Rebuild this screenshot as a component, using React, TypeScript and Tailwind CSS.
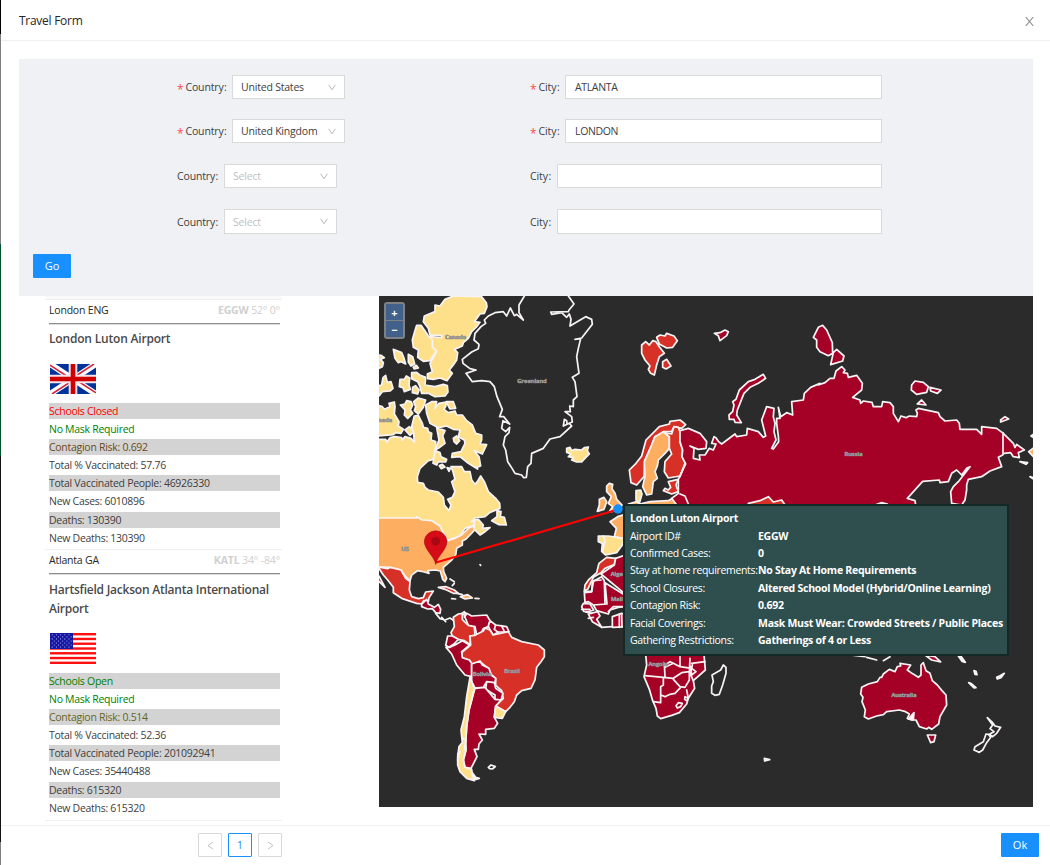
import type { ReactNode } from "react";

const CRIMSON = "#a50026";
const RED = "#d73027";
const ORANGE = "#fdae61";
const YELLOW = "#fee08b";

type Shape = [fill: string, d: string];

const northAmerica: Shape[] = [
  [YELLOW, "M210 28 L235 18 L320 20 L334 38 L336 50 L328 70 L315 72 L298 95 L315 97 L305 110 L290 125 L280 145 L265 158 L262 168 L238 178 L248 188 L245 210 L235 225 L223 240 L232 250 L216 272 L195 264 L175 268 L158 266 L157 252 L172 245 L165 220 L185 185 L172 172 L165 140 L200 143 L200 136 L165 135 L160 115 L145 95 L148 78 L180 65 L180 45 L195 48Z"],
  [YELLOW, "M118 128 L125 106 L138 106 L148 120 L160 138 L172 150 L172 172 L184 182 L165 212 L145 214 L128 202 L130 180 L115 172 L112 150Z"],
  [YELLOW, "M55 178 L80 188 L86 202 L92 222 L78 215 L70 218 L60 205Z M100 193 L113 200 L119 222 L108 228 L100 216Z M115 232 L124 226 L130 234 L118 237Z M5 195 L18 196 L28 203 L16 208 L25 218 L22 230 L5 238Z"],
  [YELLOW, "M110 248 L125 247 L134 255 L152 262 L150 285 L180 290 L205 283 L217 287 L219 306 L210 318 L180 320 L160 310 L140 310 L135 290 L128 275 L110 266Z M75 268 L88 268 L94 258 L104 264 L102 285 L106 298 L88 305 L84 293 L73 290Z M113 292 L122 287 L132 300 L128 312 L112 308Z M5 288 L20 285 L24 263 L32 256 L37 277 L48 275 L54 295 L45 303 L22 305 L12 318 L5 318Z"],
  [YELLOW, "M76 345 L90 342 L95 332 L108 335 L113 345 L106 360 L113 370 L98 385 L88 375 L90 360Z M116 335 L130 324 L152 330 L145 352 L130 372 L118 362 L122 350Z"],
  [YELLOW, "M5 345 L22 350 L28 358 L45 350 L42 340 L58 336 L60 350 L58 372 L72 395 L70 408 L85 418 L78 430 L62 428 L55 434 L5 438Z M90 420 L103 410 L118 424 L105 436Z"],
  [YELLOW, "M5 448 L32 448 L36 456 L45 443 L60 440 L80 443 L82 450 L90 440 L108 445 L118 456 L116 430 L110 410 L118 378 L130 376 L142 400 L145 412 L158 415 L160 425 L170 430 L168 450 L182 455 L182 480 L175 508 L160 512 L135 535 L127 560 L128 577 L145 580 L150 592 L160 600 L190 606 L205 622 L208 645 L222 662 L228 645 L218 628 L232 622 L240 605 L230 575 L240 568 L234 545 L228 530 L260 530 L268 545 L285 545 L290 570 L300 583 L307 575 L317 558 L328 575 L340 605 L362 625 L374 640 L375 655 L345 667 L330 680 L300 684 L290 695 L310 690 L298 705 L270 715 L255 738 L215 752 L5 710Z"],
  [YELLOW, "M155 370 L152 345 L170 335 L185 335 L180 355 L192 340 L213 336 L212 350 L207 358 L220 368 L240 363 L245 375 L262 375 L275 392 L292 405 L302 430 L320 435 L320 450 L315 462 L335 464 L322 492 L298 482 L312 500 L317 528 L305 532 L308 537 L280 520 L255 500 L230 502 L232 490 L258 485 L270 460 L268 450 L250 440 L255 420 L235 418 L215 408 L190 413 L165 400Z M185 413 L210 422 L203 438 L210 460 L190 475 L180 480 L192 450Z M213 335 L235 335 L242 355 L225 357Z M235 445 L245 438 L254 452 L245 462 L237 455Z M180 482 L195 488 L198 500 L215 508 L212 516 L190 515 L185 525 L174 520Z M193 527 L202 523 L210 531 L199 536Z M216 533 L226 535 L222 544Z"],
  ["none", "M450 15 L432 45 L432 68 L445 90 L425 73 L418 77 L406 54 L395 78 L385 65 L360 68 L340 78 L328 90 L332 100 L318 110 L300 130 L297 150 L312 163 L310 176 L290 186 L262 208 L264 220 L285 236 L303 240 L273 250 L292 275 L320 272 L345 275 L358 290 L366 320 L382 358 L374 380 L386 380 L404 402 L384 392 L380 415 L392 425 L404 412 L402 428 L390 440 L385 465 L392 480 L398 515 L408 530 L420 550 L440 555 L446 563 L454 562 L458 530 L468 520 L470 490 L505 475 L525 447 L555 440 L590 408 L583 400 L565 408 L568 388 L575 392 L576 402 L592 396 L590 380 L570 365 L586 365 L584 348 L595 350 L595 330 L606 320 L600 275 L592 262 L612 250 L605 200 L610 175 L617 146 L600 148 L620 144 L652 103 L650 88 L632 80 L585 108 L588 88 L583 72 L575 82 L560 68 L530 73 L527 66 L580 65 L582 60 L597 42 L578 15"],
  [YELLOW, "M575 475 L585 472 L590 482 L600 478 L620 480 L628 473 L640 471 L637 482 L643 492 L632 503 L620 516 L605 516 L590 510 L595 503 L580 500 L588 492 L575 487Z"],
  [ORANGE, "M5 684 L125 684 L125 680 L142 690 L170 692 L195 708 L210 738 L218 752 L240 745 L260 735 L280 715 L298 707 L297 722 L285 735 L272 748 L262 753 L262 765 L245 775 L242 795 L230 810 L205 832 L206 845 L215 865 L210 875 L203 868 L196 843 L180 840 L158 842 L162 850 L148 846 L128 842 L110 855 L105 872 L92 860 L78 840 L45 832 L5 830Z"],
  [YELLOW, "M298 690 L310 688 L325 705 L322 715 L345 713 L330 725 L315 735 L298 718Z M350 692 L366 680 L366 662 L378 665 L376 680 L388 682 L394 705 L372 704Z"],
];

const southAmerica: Shape[] = [
  [RED, "M-5 108 L38 116 L45 112 L78 120 L92 145 L105 155 L103 180 L110 200 L130 206 L145 203 L152 186 L175 183 L162 203 L160 215 L146 212 L140 222 L125 220 L100 212 L80 205 L55 188 L55 172 L38 150 L25 135 L12 115Z"],
  [RED, "M5 132 L13 140 L30 172 L18 160 L5 148Z"],
  [CRIMSON, "M140 222 L155 208 L160 222 L178 232 L190 223 L197 238 L195 250 L182 248 L172 236 L158 237 L140 230Z"],
  ["none", "M182 250 L195 266 L210 270 L225 264 L236 272 M200 262 L212 275"],
  [RED, "M190 172 L212 170 L238 180 L250 190 L235 190 L210 178Z"],
  [ORANGE, "M256 200 L278 194 L292 204 L270 207Z"],
  ["none", "M230 206 L242 207 M300 205 L312 206 M225 147 L238 155 M232 167 L238 160 M315 104 L317 106 M247 190 L262 194"],
  [RED, "M235 262 L250 252 L262 250 L262 268 L275 282 L298 290 L300 316 L284 318 L287 345 L268 332 L248 328 L232 318 L228 308 L238 290Z"],
  [CRIMSON, "M266 252 L275 250 L290 258 L335 255 L345 272 L340 290 L325 296 L318 310 L305 315 L300 290 L280 286Z"],
  [CRIMSON, "M345 272 L362 285 L395 290 L402 305 L388 306 L370 306 L355 315 L345 300 L340 288Z"],
  ["none", "M362 285 L358 298 L370 307 M380 287 L388 305 M262 250 L268 245 L274 253 L268 262"],
  [RED, "M300 316 L325 303 L330 294 L345 300 L354 315 L400 305 L410 322 L440 335 L490 345 L508 360 L508 380 L498 395 L485 412 L480 450 L468 475 L440 482 L425 495 L418 515 L405 532 L392 545 L362 528 L385 505 L380 482 L362 466 L362 445 L350 435 L340 415 L315 395 L290 402 L283 390 L262 385 L260 368 L287 345 L285 318Z"],
  [CRIMSON, "M218 318 L232 318 L250 328 L237 342 L222 352 L212 346Z M213 352 L225 352 L240 345 L262 332 L284 345 L260 365 L262 383 L283 390 L290 400 L290 440 L270 435 L245 405 L230 372Z"],
  [CRIMSON, "M290 402 L315 393 L322 405 L342 415 L348 435 L362 445 L360 458 L335 455 L325 472 L300 474 L290 455Z M335 455 L358 458 L362 475 L384 490 L378 510 L360 508 L360 495 L332 478Z"],
  [CRIMSON, "M300 475 L330 472 L345 490 L360 508 L378 510 L362 528 L358 562 L368 580 L358 595 L332 598 L332 613 L312 612 L322 630 L312 642 L310 658 L298 658 L306 680 L288 715 L270 712 L265 690 L273 660 L272 640 L275 590 L282 540 L290 510Z"],
  [YELLOW, "M362 528 L392 545 L382 565 L358 562Z"],
  [YELLOW, "M285 442 L298 475 L290 510 L282 540 L275 590 L272 640 L273 660 L265 690 L270 712 L290 718 L292 735 L298 752 L275 745 L255 725 L248 705 L248 680 L252 650 L262 638 L258 600 L268 560 L275 500Z"],
  ["none", "M262 625 L272 630 L268 660 M340 712 L348 705 L361 710 L352 717 L344 716Z M248 672 L255 665 L248 690"],
  [CRIMSON, "M292 728 L302 742 L313 745 L300 749Z"],
  [RED, "M672 100 L695 82 L722 85 L718 104 L690 115 L678 128 L655 142 L638 178 L628 183 L630 165 L642 148 L665 128Z"],
  [CRIMSON, "M722 85 L760 72 V200 L678 132 L718 105Z"],
  [CRIMSON, "M628 188 L650 186 L652 155 L680 140 L688 152 L690 222 L655 225 L640 215 L630 218Z M690 158 L760 202 V228 L730 232 L705 240 L700 252 L665 242 L655 225 L696 222Z"],
  [CRIMSON, "M625 220 L645 222 L656 240 L640 245 L626 244 L620 230Z M640 252 L668 245 L675 258 L665 268 L680 292 L652 275Z M712 260 L740 250 L760 260 L760 290 L712 292Z"],
  ["none", "M620 238 H645 M632 246 L650 250 M680 292 L712 290 M700 245 L715 230 L745 230 M733 252 V292 M655 262 L640 265 M628 184 L650 184 L656 152 L678 150 M740 255 L741 290"],
  [YELLOW, "M670 18 L700 18 L748 25 L742 45 L725 68 L692 75 L680 64 L682 40 L670 35Z"],
  ["none", "M684 18 L690 30 L683 65"],
  [ORANGE, "M705 -25 L728 -40 L760 -50 V28 L718 20 L724 -5Z"],
];

const eurasia: Shape[] = [
  [ORANGE, "M20 588 L28 580 L38 583 L36 596 L45 610 L50 628 L66 645 L58 662 L28 665 L38 650 L25 640 L34 620 L20 605Z M-2 628 L12 622 L20 635 L12 658 L-8 664 L-2 645Z"],
  [ORANGE, "M85 642 L110 635 L120 642 L150 635 L205 632 L225 620 L240 645 V665 H75Z"],
  [YELLOW, "M108 602 L122 600 L126 612 L118 640 L108 630Z"],
  [RED, "M88 540 L108 520 L125 498 L138 450 L178 410 L208 402 L210 394 L240 390 L248 396 L257 404 L245 415 L222 410 L215 425 L190 425 L175 438 L165 440 L155 465 L135 510 L132 560 L110 585 L93 578Z"],
  [ORANGE, "M190 425 L208 440 L208 475 L195 490 L175 510 L172 528 L165 545 L172 565 L160 575 L155 612 L140 615 L128 590 L135 560 L133 515 L155 465 L165 440Z"],
  [RED, "M222 410 L235 412 L242 430 L240 455 L248 480 L246 500 L257 520 L240 558 L205 564 L193 545 L195 515 L215 492 L208 475 L208 440 L192 428 L215 432Z"],
  [RED, "M205 575 L235 568 L228 585 L235 605 L215 612 L190 602 L195 595 L205 600 L212 592Z"],
  [CRIMSON, "M240 422 L265 415 L300 430 L320 455 L318 475 L295 478 L270 468 L282 475 L280 505 L300 510 L298 495 L315 495 L328 475 L340 480 L348 462 L335 460 L342 440 L348 443 L356 455 L365 462 L405 432 L410 440 L440 435 L442 415 L475 425 L490 442 L497 438 L485 390 L500 350 L522 355 L520 380 L525 400 L522 425 L528 450 L515 475 L520 477 L536 455 L535 438 L530 400 L530 385 L540 385 L535 352 L542 380 L560 368 L578 375 L575 335 L610 330 L613 310 L632 292 L660 280 L655 285 L675 278 L690 265 L702 265 L708 243 L725 230 L735 240 L730 248 L742 250 L745 262 L770 256 L787 280 L785 300 L758 322 L780 330 L782 340 L790 333 L816 337 L820 350 L845 350 L848 335 L870 338 L880 350 L880 370 L895 395 L903 378 L918 383 L928 378 L950 380 L952 370 L948 360 L955 355 L1015 368 L1020 380 L1035 393 L1070 390 L1078 400 L1080 418 L1130 418 L1145 433 L1145 410 L1190 415 L1210 430 L1240 460 L1245 472 L1250 463 L1273 480 L1255 488 L1258 503 L1240 500 L1232 488 L1212 490 L1208 495 L1195 502 L1205 530 L1170 543 L1145 560 L1105 568 L1100 585 L1100 600 L1095 630 L1085 645 L1055 640 L1052 605 L1060 590 L1075 575 L1110 530 L1100 535 L1085 555 L1070 540 L1055 550 L1045 575 L1020 578 L1018 570 L968 574 L922 625 L945 632 L950 665 L245 665 L215 625 L235 610 L235 568 L257 522 L246 500 L248 480 L240 455Z"],
  ["none", "M1209 428 V490 M240 612 L255 618 L265 642 M255 520 L240 560"],
  [RED, "M445 640 L480 632 L505 620 L520 636 L545 630 L555 645 L550 660 H445Z"],
  [YELLOW, "M825 645 L845 638 L862 642Z"],
  [RED, "M125 165 L137 155 L148 165 L158 152 L168 155 L178 170 L193 190 L178 200 L170 225 L163 255 L152 250 L145 238 L150 228 L135 210 L125 190Z M170 142 L180 135 L195 138 L200 130 L222 138 L232 152 L218 172 L200 174 L178 162Z M188 215 L200 208 L213 228 L198 237 L188 232Z"],
  [CRIMSON, "M343 130 L360 128 L375 120 L385 125 L380 137 L360 152 L355 137Z M387 375 L398 365 L402 345 L398 335 L408 328 L418 300 L445 275 L465 268 L490 253 L497 265 L475 280 L450 292 L432 310 L420 340 L412 360 L410 375 L424 398 L405 397 L402 388 L388 388Z"],
  [CRIMSON, "M640 142 L655 112 L668 106 L680 120 L697 158 L698 190 L685 197 L660 185 L650 172 L650 150Z M700 188 L710 178 L732 198 L728 213 L692 224Z M935 285 L945 273 L970 277 L985 290 L980 307 L950 313 L934 300Z M990 292 L1023 300 L1012 310 L992 303Z M952 342 L965 330 L978 345Z M1202 390 L1215 380 L1226 387 L1202 396Z"],
  [ORANGE, "M1286 485 L1305 470 V505Z M1293 438 L1305 430 V445Z M1290 560 L1305 565 V570Z M1260 515 L1283 518 L1278 523Z"],
];

const southern: Shape[] = [
  [CRIMSON, "M75 -10 L250 -10 L256 60 L220 92 L224 115 L205 145 L200 162 L178 188 L155 196 L122 206 L112 198 L108 175 L98 152 L88 118 L72 80 L80 45Z"],
  ["none", "M75 77 L130 82 L160 85 L185 68 L208 65 V90 L195 112 L180 110 L160 88 M130 82 V105 L122 110 V158 L100 155 M122 135 L135 140 L150 133 L165 130 L182 112 M133 40 L135 80 M135 52 L160 40 L180 50 L215 55 L218 40 M180 20 V50 M210 25 L208 68 M215 40 L255 35 M215 55 L228 65 L215 75 L212 50 M200 120 L205 145 M195 140 L205 145 L200 152 L194 148Z M168 167 L175 158 L187 160 L182 170 L172 174Z M160 40 L150 35 L135 45 M208 65 L220 92"],
  ["none", "M302 60 L310 45 L318 52 L318 70 L308 105 L298 133 L285 136 L275 130 L275 108 L280 95 L276 75Z"],
  [CRIMSON, "M725 112 L745 102 L772 95 L780 82 L785 82 L790 72 L808 58 L825 65 L832 50 L842 48 L840 40 L872 45 L862 60 L876 70 L895 82 L903 75 L903 45 L910 38 L918 62 L930 70 L937 92 L952 105 L966 122 L978 135 L980 165 L960 200 L956 222 L935 238 L926 232 L920 237 L898 230 L888 210 L875 210 L862 205 L868 192 L854 184 L838 180 L800 185 L790 194 L770 198 L745 207 L733 200 L736 180 L726 155 L729 142 L722 132Z"],
  ["#ffffff", "M865 207 L882 188 L880 210Z"],
  [CRIMSON, "M922 255 L947 255 L942 275 L932 278Z"],
  ["none", "M1102 203 L1118 218 L1125 228 L1142 232 L1130 250 L1118 260 L1108 253 L1122 245 L1110 236 L1118 225Z M1105 253 L1112 262 L1100 278 L1088 300 L1078 307 L1062 300 L1065 290 L1090 275 L1098 252Z M433 325 L449 329 L434 333Z"],
  ["#ffffff", "M1046 98 L1054 101 L1068 113 L1062 114Z M1062 62 L1068 64 L1071 74 L1065 73Z M1130 82 L1140 77 L1153 70 L1143 83 L1132 87Z M1015 18 L1024 20 L1036 37 L1026 34Z M790 32 L810 20 M740 22 L770 30 M690 15 L735 20"],
  [CRIMSON, "M915 15 L945 20 L962 36 L935 30Z"],
];

function Land({ shapes, x, y }: { shapes: Shape[]; x: number; y: number }) {
  return (
    <g transform={`translate(${x} ${y}) scale(0.33333)`} stroke="#f7f3f4" strokeWidth="5.2" strokeLinejoin="round" strokeLinecap="round">
      {shapes.map(([fill, d], i) => (
        <path key={i} fill={fill} d={d} />
      ))}
    </g>
  );
}

const mapLabels: [string, number, number][] = [
  ["Canada", 455.5, 339],
  ["Greenland", 532, 383],
  ["US", 405, 551],
  ["Brazil", 512, 673],
  ["Bolivia", 482, 676],
  ["Russia", 853.5, 456],
  ["Australia", 904, 697],
  ["nada", 385, 422],
  ["Angola", 658, 666],
  ["Alger", 618, 576],
  ["Mali", 617, 601],
];

function WorldMap() {
  return (
    <svg className="block" width="654" height="511" viewBox="379 296 654 511">
      <rect x="379" y="296" width="654" height="511" fill="#2b2b2b" />
      <Land shapes={northAmerica} x={375} y={290} />
      <Land shapes={southAmerica} x={375} y={530} />
      <Land shapes={eurasia} x={600} y={290} />
      <Land shapes={southern} x={620} y={650} />
      <g fontFamily="'Open Sans', sans-serif" fontSize="5.8" fontWeight="600" textAnchor="middle" fill="#a2a2a2" stroke="#808080" strokeWidth="0.7" paintOrder="stroke">
        {mapLabels.map(([name, x, y]) => (
          <text key={name} x={x} y={y}>{name}</text>
        ))}
      </g>
      <path d="M436 562.5 L618 509.5" stroke="#ff0000" strokeWidth="2.2" fill="none" />
      <path d="M435.7 564.5 C434.5 556 424.3 550 424.3 541 A11.4 11.2 0 0 1 447 541 C447 550 437 556 435.7 564.5Z" fill="#d50b18" stroke="#a80713" strokeWidth="0.6" />
      <circle cx="435.7" cy="541.2" r="4.3" fill="#a80713" />
      <circle cx="618" cy="509" r="4.7" fill="#1190fb" />
    </svg>
  );
}

function Chevron() {
  return (
    <svg className="h-[7px] w-[8px]" viewBox="0 0 8 7" fill="none" stroke="#b8b8b8" strokeWidth="1">
      <path d="M0.7 0.8 L4 5.8 L7.3 0.8" />
    </svg>
  );
}

function Label({ text, required, className }: { text: string; required?: boolean; className: string }) {
  return (
    <span className={`flex shrink-0 items-center whitespace-nowrap pt-[2px] ${className}`}>
      {required && <span className="mr-[2px] pt-[3px] text-[12px] leading-none text-[#ff4d4f]">*</span>}
      {text}
      <span className="ml-[0.5px]">:</span>
    </span>
  );
}

function FormRow({ country, city, required, className }: { country?: string; city?: string; required?: boolean; className: string }) {
  return (
    <div className={`flex items-center ${className}`}>
      <div className="flex h-full w-[352px] items-center pl-[158px]">
        <Label text="Country" required={required} className={required ? "w-[55px] tracking-[-0.15px]" : "w-[47px] tracking-[-0.15px]"} />
        <div className={`flex h-full w-[113px] items-center justify-between border border-[#d9d9d9] bg-white pl-2 pr-2 ${country ? "" : "text-[#bfbfbf]"}`}>
          <span className="pt-[2px] tracking-[-0.2px]">{country ?? "Select"}</span>
          <Chevron />
        </div>
      </div>
      <div className="flex h-full w-[511px] items-center pl-[158px]">
        <Label text="City" required={required} className={required ? "w-[36px] pl-px tracking-[-0.1px]" : "w-[28px] pl-px tracking-[-0.1px]"} />
        <div className="flex h-full flex-1 items-center border border-[#d9d9d9] bg-white px-[9px] pt-[2px] tracking-[-0.35px]">{city}</div>
      </div>
    </div>
  );
}

function UkFlag() {
  return (
    <svg className="block" width="46" height="30" viewBox="0 0 46 30">
      <rect width="46" height="30" fill="#003399" />
      <path d="M0 0 L46 30 M46 0 L0 30" stroke="#fff" strokeWidth="6" />
      <path d="M0 1.2 L19 13.5 M46 28.8 L27 16.5 M44 0 L25 12.5 M2 30 L21 17.5" stroke="#d4213d" strokeWidth="1.5" />
      <path d="M23 0 V30 M0 15 H46" stroke="#f4e3e8" strokeWidth="8.6" />
      <path d="M23 0 V30 M0 15 H46" stroke="#d00000" strokeWidth="4.6" />
    </svg>
  );
}

function UsFlag() {
  return (
    <svg className="block" width="46" height="31" viewBox="0 0 46 31">
      <rect width="46" height="31" fill="#fff" />
      {[0, 1, 2, 3, 4, 5, 6].map((i) => (
        <rect key={i} y={i * 4.77} width="46" height="2.4" fill="#ff1010" />
      ))}
      <rect width="23" height="16" fill="#1717a5" />
      {[0, 1, 2, 3, 4, 5, 6].map((r) =>
        [0, 1, 2, 3, 4].map((c) => (
          <circle key={`${r}-${c}`} cx={2.2 + c * 4.2 + (r % 2) * 2.1} cy={1.8 + r * 2.05} r="0.55" fill="#b9b9ee" />
        )),
      )}
    </svg>
  );
}

type AirportProps = {
  place: string;
  code: string;
  coords: string;
  name: string;
  flag: ReactNode;
  stats: [text: string, color: string][];
  className: string;
  nameClass: string;
};

function AirportCard({ place, code, coords, name, flag, stats, className, nameClass }: AirportProps) {
  return (
    <article className={`border-b border-[#f0f0f0] pl-1 pr-[2px] tracking-[-0.28px] ${className}`}>
      <div className="flex h-[23px] items-center justify-between pb-[2px] text-[#262626]">
        <span className="tracking-[-0.2px]">{place}</span>
        <span className="tracking-[-0.15px] text-[#d0d0d0]">
          <b className="font-bold">{code}</b> {coords}
        </span>
      </div>
      <div className="h-[2px] border-t border-[#8d8d8d] bg-[#dcdcdc]" />
      <h3 className={`text-[12px] font-semibold leading-[19px] text-[#4a4a4a] ${nameClass}`}>{name}</h3>
      <div className="mb-[9px] ml-px">{flag}</div>
      {stats.map(([text, color], i) => (
        <div key={text} className={`mb-[2.1px] h-4 leading-4 ${i % 2 === 0 ? "bg-[#d3d3d3]" : ""} ${color}`}>{text}</div>
      ))}
    </article>
  );
}

const tooltipRows: [string, string, string][] = [
  ["Airport ID#", "EGGW", "h-[16px]"],
  ["Confirmed Cases:", "0", "h-[17px]"],
  ["Stay at home requirements:", "No Stay At Home Requirements", "h-[18px]"],
  ["School Closures:", "Altered School Model (Hybrid/Online Learning)", "h-[17px]"],
  ["Contagion Risk:", "0.692", "h-[18px]"],
  ["Facial Coverings:", "Mask Must Wear: Crowded Streets / Public Places", "h-[17px]"],
  ["Gathering Restrictions:", "Gatherings of 4 or Less", "h-[18px]"],
];

export default function App() {
  return (
    <div className="flex h-[865px] w-[1050px] overflow-hidden bg-white font-['Open_Sans',sans-serif] text-[10.5px] text-[#404040]">
      <div className="flex w-px shrink-0 flex-col">
        <div className="h-[34px] bg-black" />
        <div className="h-[210px] bg-[#808080]" />
        <div className="h-[212px] bg-[#00512f]" />
        <div className="h-[386px] bg-[#111111]" />
        <div className="flex-1 bg-[#808080]" />
      </div>
      <div className="flex flex-1 flex-col">
        <header className="flex h-[41px] items-center justify-between border-b border-[#f0f0f0] pl-[18px] pr-[16px] pt-[2px]">
          <h1 className="text-[12px] font-medium tracking-[-0.27px] text-[#262626]">Travel Form</h1>
          <svg className="size-[9px]" viewBox="0 0 9 9" fill="none" stroke="#8c8c8c" strokeWidth="1.1">
            <path d="M0.7 0 L8.3 9 M8.3 0 L0.7 9" />
          </svg>
        </header>

        <main className="flex-1 pl-[18px] pr-[17px] pt-[18px]">
          <section className="h-[237px] bg-[#f0f1f5] pt-4">
            <FormRow country="United States" city="ATLANTA" required className="h-6" />
            <FormRow country="United Kingdom" city="LONDON" required className="mt-5 h-6" />
            <FormRow className="mt-[21px] h-6" />
            <FormRow className="mt-[21px] h-[25px]" />
            <button className="ml-[14px] mt-5 h-6 w-[38px] rounded-[1px] bg-[#1890ff] text-[11px] font-medium text-white">Go</button>
          </section>

          <section className="flex justify-between">
            <div className="ml-[26px] w-[237px]">
              <div className="h-[4px] border-b border-[#f0f0f0] bg-[#fafafa]" />
              <AirportCard
                place="London ENG"
                code="EGGW"
                coords="52° 0°"
                name="London Luton Airport"
                flag={<UkFlag />}
                className="h-[250px]"
                nameClass="mt-[4px] mb-[16px] tracking-[-0.19px]"
                stats={[
                  ["Schools Closed", "text-[#ff0000]"],
                  ["No Mask Required", "text-[#008000]"],
                  ["Contagion Risk: 0.692", "text-[#6a4a18]"],
                  ["Total % Vaccinated: 57.76", ""],
                  ["Total Vaccinated People: 46926330", ""],
                  ["New Cases: 6010896", ""],
                  ["Deaths: 130390", ""],
                  ["New Deaths: 130390", ""],
                ]}
              />
              <AirportCard
                place="Atlanta GA"
                code="KATL"
                coords="34° -84°"
                name="Hartsfield Jackson Atlanta International Airport"
                flag={<UsFlag />}
                className="h-[271px]"
                nameClass="mt-[5px] mb-[15px] tracking-[-0.23px]"
                stats={[
                  ["Schools Open", "text-[#008000]"],
                  ["No Mask Required", "text-[#008000]"],
                  ["Contagion Risk: 0.514", "text-[#66661a]"],
                  ["Total % Vaccinated: 52.36", ""],
                  ["Total Vaccinated People: 201092941", ""],
                  ["New Cases: 35440488", ""],
                  ["Deaths: 615320", ""],
                  ["New Deaths: 615320", ""],
                ]}
              />
            </div>

            <div className="relative h-[511px] w-[654px]">
              <WorldMap />
              <div className="absolute left-[5px] top-[6px] flex w-[21px] flex-col gap-px rounded-[3px] bg-[#7f8285] p-[2px] text-[11px] font-bold leading-none text-white">
                <button className="h-4 rounded-t-[1px] bg-[#41608a]">+</button>
                <button className="h-4 rounded-b-[1px] bg-[#41608a]">−</button>
              </div>
              <div className="absolute left-[244px] top-[208px] h-[152px] w-[386px] border-2 border-[#142827] bg-[#2f4f4f] px-[5px] pt-[4px] text-white">
                <div className="h-[19px] font-bold leading-[16px] tracking-[-0.27px]">London Luton Airport</div>
                {tooltipRows.map(([label, value, height]) => (
                  <div key={label} className={`flex items-center whitespace-nowrap ${height}`}>
                    <span className="w-[128px] shrink-0 tracking-[-0.33px]">{label}</span>
                    <b className="font-bold tracking-[-0.26px]">{value}</b>
                  </div>
                ))}
              </div>
            </div>
          </section>
        </main>

        <footer className="flex h-10 items-start justify-between border-t border-[#f0f0f0] pl-[197px] pr-[11px] pt-[7px]">
          <nav className="flex gap-[6px]">
            <button className="flex size-6 items-center justify-center rounded-[1px] border border-[#d9d9d9]">
              <svg width="7" height="9" viewBox="0 0 7 9" fill="none" stroke="#c4c4c4"><path d="M6 1 L1 4.5 L6 8" /></svg>
            </button>
            <button className="flex size-6 items-center justify-center rounded-[1px] border border-[#1890ff] text-[11px] font-medium text-[#1890ff]">1</button>
            <button className="flex size-6 items-center justify-center rounded-[1px] border border-[#d9d9d9]">
              <svg width="7" height="9" viewBox="0 0 7 9" fill="none" stroke="#c4c4c4"><path d="M1 1 L6 4.5 L1 8" /></svg>
            </button>
          </nav>
          <button className="h-6 w-[38px] rounded-[1px] bg-[#1890ff] text-[11px] font-medium text-white">Ok</button>
        </footer>
      </div>
    </div>
  );
}
